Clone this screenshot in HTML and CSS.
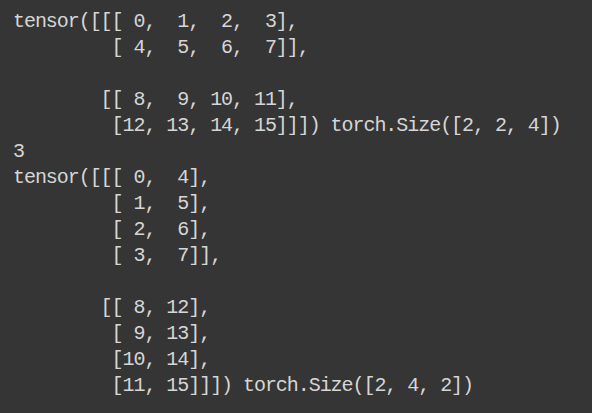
FILE: index.html
```html
<!DOCTYPE html>
<html>
<head>
<meta charset="utf-8">
<link rel="stylesheet" href="styles.css">
</head>
<body>
<pre class="out">tensor([[[ 0,  1,  2,  3],
         [ 4,  5,  6,  7]],

        [[ 8,  9, 10, 11],
         [12, 13, 14, 15]]]) torch.Size([2, 2, 4])
3
tensor([[[ 0,  4],
         [ 1,  5],
         [ 2,  6],
         [ 3,  7]],

        [[ 8, 12],
         [ 9, 13],
         [10, 14],
         [11, 15]]]) torch.Size([2, 4, 2])</pre>
</body>
</html>
```
FILE: styles.css
```css
html, body {
  margin: 0;
  padding: 0;
  background: #353535;
  height: 100%;
}
.out {
  margin: 0;
  padding: 9px 0 0 13px;
  font-family: "Liberation Mono", monospace;
  font-size: 20px;
  letter-spacing: -1.05px;
  line-height: 26px;
  color: #d6d6d6;
}
```
